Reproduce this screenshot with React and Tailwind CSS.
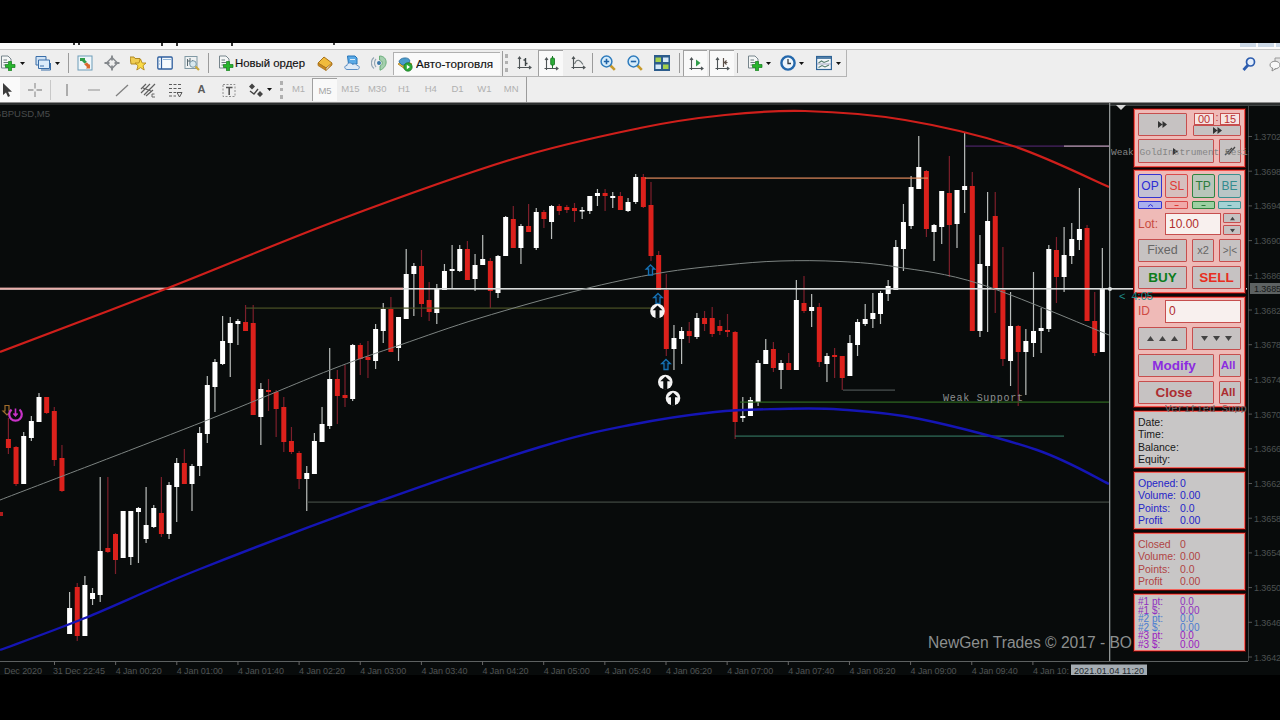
import clsx from 'clsx'

// bar: [high, bodyTop, bodyBottom, low, up]
const BARS = [
  [418, 439, 448, 454, 0], [446, 447, 484, 486, 0], [432, 436, 484, 484, 1], [416, 421, 438, 441, 1], [393, 397, 422, 422, 1],
  [397, 397, 413, 414, 0], [407, 411, 460, 466, 0], [445, 458, 491, 492, 0], [592, 608, 634, 634, 1], [583, 587, 636, 641, 0],
  [576, 585, 636, 636, 1], [588, 593, 599, 605, 1], [477, 551, 595, 602, 1], [477, 548, 552, 553, 0], [533, 534, 560, 574, 0],
  [511, 511, 558, 558, 1], [511, 511, 557, 565, 1], [507, 508, 512, 563, 1], [487, 525, 539, 543, 1], [505, 508, 527, 528, 1],
  [477, 513, 534, 537, 0], [482, 485, 534, 539, 1], [458, 463, 487, 522, 1], [449, 463, 484, 484, 0], [464, 466, 484, 511, 1],
  [427, 433, 466, 476, 1], [376, 385, 434, 443, 1], [359, 362, 387, 412, 1], [316, 341, 364, 365, 1], [317, 323, 343, 377, 1],
  [319, 321, 324, 345, 1], [305, 322, 331, 331, 0], [305, 323, 415, 415, 0], [383, 389, 417, 445, 1], [379, 390, 392, 411, 0],
  [390, 392, 409, 437, 0], [397, 407, 442, 452, 0], [427, 441, 452, 454, 0], [451, 453, 479, 489, 0], [466, 473, 479, 511, 1],
  [433, 441, 474, 474, 1], [407, 424, 442, 442, 1], [348, 379, 426, 429, 1], [370, 379, 396, 424, 0], [365, 395, 398, 407, 0],
  [344, 345, 399, 401, 1], [343, 345, 359, 375, 0], [341, 357, 360, 378, 0], [324, 329, 361, 369, 1], [303, 309, 331, 343, 1],
  [297, 309, 352, 352, 0], [317, 317, 348, 361, 1], [249, 274, 319, 319, 1], [263, 266, 274, 316, 1], [250, 266, 304, 317, 0],
  [282, 300, 312, 321, 0], [284, 289, 313, 324, 1], [264, 271, 290, 290, 1], [245, 269, 271, 288, 1], [245, 249, 271, 272, 1],
  [241, 249, 280, 280, 0], [254, 265, 279, 291, 1], [235, 259, 265, 265, 1], [258, 261, 291, 308, 0], [255, 256, 293, 298, 1],
  [216, 217, 256, 256, 1], [206, 219, 248, 248, 0], [224, 226, 248, 264, 1], [204, 226, 232, 232, 0], [208, 212, 248, 250, 1],
  [210, 212, 219, 228, 0], [205, 206, 222, 239, 1], [204, 206, 211, 215, 0], [205, 207, 210, 213, 0], [203, 208, 211, 222, 0],
  [207, 210, 211, 219, 1], [196, 196, 211, 214, 1], [189, 193, 196, 206, 1], [189, 193, 196, 211, 0], [192, 196, 198, 208, 1],
  [192, 196, 210, 210, 0], [198, 202, 211, 212, 1], [174, 177, 202, 204, 1], [174, 177, 207, 208, 0], [182, 205, 256, 261, 0],
  [251, 255, 290, 290, 0], [274, 290, 349, 356, 0], [325, 338, 349, 370, 1], [327, 331, 339, 364, 1], [322, 331, 336, 343, 0],
  [313, 318, 337, 339, 1], [311, 318, 324, 331, 0], [307, 318, 334, 337, 0], [320, 326, 331, 335, 0], [314, 330, 332, 337, 0],
  [331, 332, 422, 439, 0], [397, 416, 418, 422, 1], [397, 400, 416, 416, 1], [360, 363, 402, 406, 1], [339, 350, 364, 364, 1],
  [342, 349, 368, 372, 0], [360, 363, 370, 389, 1], [353, 363, 370, 370, 0], [280, 300, 370, 370, 1], [276, 303, 311, 313, 0],
  [294, 307, 311, 327, 1], [303, 307, 362, 367, 0], [353, 356, 364, 382, 1], [348, 355, 357, 378, 0], [356, 356, 378, 390, 0],
  [335, 343, 376, 376, 1], [319, 322, 345, 356, 1], [304, 319, 324, 326, 1], [293, 313, 319, 328, 1], [291, 293, 314, 324, 1],
  [280, 286, 294, 301, 1], [240, 247, 290, 290, 1], [204, 222, 249, 271, 1], [176, 187, 226, 229, 1], [136, 167, 189, 189, 1],
  [170, 171, 229, 237, 0], [224, 225, 232, 261, 1], [191, 191, 227, 244, 1], [156, 193, 225, 277, 0], [190, 190, 224, 248, 1],
  [133, 186, 190, 213, 1], [172, 186, 331, 331, 0], [235, 264, 331, 337, 1], [192, 221, 266, 332, 1], [192, 216, 290, 313, 0],
  [247, 290, 359, 366, 0], [292, 326, 361, 386, 1], [325, 326, 352, 406, 0], [329, 341, 352, 395, 1], [272, 331, 343, 357, 1],
  [308, 328, 331, 353, 1], [245, 249, 329, 332, 1], [237, 250, 277, 303, 0], [227, 255, 277, 292, 1], [223, 239, 256, 264, 1],
  [188, 229, 240, 250, 1], [225, 228, 321, 321, 0], [292, 321, 353, 356, 0], [248, 289, 352, 352, 1],
]

const UPPER = [[0, 352], [168, 288], [340, 219.5], [513, 159], [640, 128], [725, 115], [805, 111], [905, 120], [1013, 146], [1109, 187]]
const MIDDLE = [[0, 500], [200, 423], [330, 370], [400, 345], [480, 318], [580, 290], [660, 273], [725, 265], [780, 261], [840, 261.5], [897, 267], [980, 284], [1109, 335]]
const LOWER = [[0, 650], [85, 618], [200, 569], [380, 501], [540, 447], [630, 425], [715, 412], [780, 409], [840, 409.5], [920, 419], [1037, 450], [1109, 484]]

const LEVELS = [
  [246, 655, 308, '#4a5226'], [645, 928, 178, '#e0895c'], [965, 1064, 146, '#4c2468'], [1064, 1109, 146, '#c9a6c6'],
  [843, 895, 390, '#4d5454'], [740, 1109, 402, '#2f6a22'], [735, 1064, 436, '#31705c'], [307, 1109, 502, '#424a44'],
]

const PRICES = ['1.37020', '1.36980', '1.36940', '1.36900', '1.36860', '1.36820', '1.36780', '1.36740', '1.36700', '1.36660', '1.36620', '1.36580', '1.36540', '1.36500', '1.36460', '1.36420']
const TIMES = ['31 Dec 22:45', '4 Jan 00:20', '4 Jan 01:00', '4 Jan 01:40', '4 Jan 02:20', '4 Jan 03:00', '4 Jan 03:40', '4 Jan 04:20', '4 Jan 05:00', '4 Jan 05:40', '4 Jan 06:20', '4 Jan 07:00', '4 Jan 07:40', '4 Jan 08:20', '4 Jan 09:00', '4 Jan 09:40']

const barX = (i) => 8.4 + i * 7.65

// catmull-rom through the points
function smooth(p) {
  let d = `M${p[0][0]} ${p[0][1]}`
  for (let i = 0; i < p.length - 1; i++) {
    const a = p[i - 1] || p[i]
    const b = p[i]
    const c = p[i + 1]
    const e = p[i + 2] || c
    d += ` C${b[0] + (c[0] - a[0]) / 6} ${b[1] + (c[1] - a[1]) / 6} ${c[0] - (e[0] - b[0]) / 6} ${c[1] - (e[1] - b[1]) / 6} ${c[0]} ${c[1]}`
  }
  return d
}

const BlueArrow = ({ x, y }) => (
  <path transform={`translate(${x} ${y})`} d="M0 -5L4.3 -1H2V5H-2V-1H-4.3Z" fill="#04182a" stroke="#1672b4" strokeWidth="1.3" />
)

const RoundArrow = ({ x, y }) => (
  <g transform={`translate(${x} ${y})`}>
    <circle r="7.3" fill="#f4f4f4" />
    <path d="M0 -5.4L5 -0.8H2V7.5H-2V-0.8H-5Z" fill="#0a0d0d" />
  </g>
)

function Chart() {
  return (
    <svg className="block w-[1280px] h-[572px]" viewBox="0 103 1280 572" fontFamily="'Liberation Sans', sans-serif">
      <rect x="0" y="103" width="1280" height="572" fill="#080b0b" />
      <rect x="0" y="103" width="1280" height="2" fill="#2c2f2f" />
      <text x="-6" y="116.5" fontSize="9.5" fill="#484c4c" textLength="56">GBPUSD,M5</text>

      {/* axes */}
      <path d="M1109 105.5H1280M1248.5 105V661M0 661.5H1248" stroke="#3f4444" fill="none" />
      <path d="M0 661.5H1248" stroke="#5d6161" />
      {PRICES.map((p, i) => (
        <g key={p}>
          <path d={`M1248 ${136.5 + i * 34.7}h4`} stroke="#555" />
          <text x="1254" y={140 + i * 34.7} fontSize="9" fill="#4c5151" textLength="32">{p}</text>
        </g>
      ))}
      <rect x="1250" y="283" width="30" height="11" fill="#5d6262" />
      <text x="1254" y="292" fontSize="9" fill="#161818" textLength="32">1.36855</text>
      <text x="4" y="674" fontSize="9" fill="#505454" textLength="38">Dec 2020</text>
      {TIMES.map((t, i) => (
        <g key={t}>
          <path d={`M${54.5 + i * 61.15} 661v4`} stroke="#666" />
          <text x={(i ? 54.5 : 53) + i * 61.15} y="674" fontSize="9" fill="#505454" textLength={i ? 46 : 52}>{t}</text>
        </g>
      ))}
      <path d="M1032.9 661v4" stroke="#666" />
      <text x="1033" y="674" fontSize="9" fill="#505454" textLength="36">4 Jan 10:</text>
      <rect x="1071" y="664.5" width="76" height="10.5" fill="#a4acb2" />
      <text x="1074" y="673.5" fontSize="9" fill="#22282e" textLength="70">2021.01.04 11:20</text>

      {/* bars */}
      <rect x="0" y="512" width="3" height="4" fill="#b01c1c" />
      {BARS.map(([h, t, b, l, up], i) => (
        <g key={i}>
          <rect x={barX(i) - 0.6} y={h} width="1.2" height={l - h} fill={up ? '#b9bdbb' : '#7c1f2b'} />
          <rect x={barX(i) - 2.5} y={t} width="5" height={Math.max(b - t, 1.5)} fill={up ? '#ffffff' : '#dc211c'} />
        </g>
      ))}

      {/* levels */}
      {LEVELS.map(([x1, x2, y, c]) => (
        <rect key={`${x1}-${y}`} x={x1} y={y - 0.5} width={x2 - x1} height="1.2" fill={c} />
      ))}
      <rect x="0" y="288" width="1247" height="1.6" fill="#d9dcdc" />
      <rect x="0" y="287.6" width="403" height="2" fill="#eab0ac" />

      {/* bands */}
      <path d={smooth(MIDDLE)} fill="none" stroke="#7d8482" strokeWidth="1" />
      <path d={smooth(UPPER)} fill="none" stroke="#cf1f1b" strokeWidth="2.2" />
      <path d={smooth(LOWER)} fill="none" stroke="#1515b4" strokeWidth="2.4" />
      <rect x="1109" y="103" width="1.3" height="558" fill="#8f9494" />
      <path d="M1116 105H1126L1121 110Z" fill="#d8d8d8" />
      <circle cx="1110" cy="289" r="2" fill="#dfe3e3" />

      {/* signals */}
      <BlueArrow x={650.5} y={270} />
      <BlueArrow x={658} y={298.5} />
      <BlueArrow x={666} y={364.5} />
      <RoundArrow x={657.5} y={311} />
      <RoundArrow x={665.3} y={382} />
      <RoundArrow x={673} y={398} />
      <path d="M5 405.5H9V411H11L7 415L3 411H5Z" fill="none" stroke="#a06c2c" strokeWidth="1.2" />
      <path d="M11.5 409.5A6.3 6.3 0 1 0 19.5 409.5" fill="none" stroke="#c832c8" strokeWidth="2.2" />
      <path d="M15.5 408.5V415M13.4 413.5L15.5 415.8L17.6 413.5" fill="none" stroke="#c832c8" strokeWidth="1.6" />

      <text x="943" y="401" fontSize="10" fontFamily="'Liberation Mono', monospace" fill="#8d9191" textLength="80">Weak Support</text>
      <text x="928" y="648" fontSize="16" fill="#8c8f8f" textLength="204" lengthAdjust="spacingAndGlyphs">NewGen Trades © 2017 - BO</text>
    </svg>
  )
}

/* ---------- trade panel ---------- */

const Box = ({ className, children }) => (
  <div className={clsx('w-[111px] border px-[3px] flex flex-col shrink-0 outline outline-[#5c0505]', className)}>{children}</div>
)

const Btn = ({ bg = 'bg-[#c6c2c2]', className, children }) => (
  <button className={clsx('flex items-center justify-center border rounded-[1px] whitespace-nowrap leading-none', bg, className)}>{children}</button>
)

const RED = 'border-[#c64e4e]'

const Forward = () => (
  <svg className="w-[9px] h-[7px]" viewBox="0 0 9 7"><path d="M0 0L4.5 3.5L0 7ZM4.5 0L9 3.5L4.5 7Z" fill="#333" /></svg>
)

const Tri = ({ down }) => (
  <svg className="w-[7px] h-[5px]" viewBox="0 0 7 5"><path d={down ? 'M0 0H7L3.5 5Z' : 'M0 5H7L3.5 0Z'} fill="#444" /></svg>
)

const MODES = [
  ['OP', 'border-[#3434d0] text-[#2c2cd4] w-6', 'bg-[#c3c1d4]', 'bg-[#aab0ee]'],
  ['SL', 'border-[#d84c4c] text-[#e03a34] w-[23px]', 'bg-[#d6bfbe]', 'bg-[#f0aaaa]'],
  ['TP', 'border-[#2f8440] text-[#2c7c3c] w-[23px]', 'bg-[#b8c6ba]', 'bg-[#9cd0a2]'],
  ['BE', 'border-[#3a9090] text-[#348c90] w-[23px]', 'bg-[#b9c6c6]', 'bg-[#a4d2d4]'],
]

const STATS = [
  ['text-[#2424c8]', [['Opened:', '0'], ['Volume:', '0.00'], ['Points:', '0.0'], ['Profit', '0.00']]],
  ['text-[#b04444]', [['Closed', '0'], ['Volume:', '0.00'], ['Points:', '0.0'], ['Profit', '0.00']]],
]

const TARGETS = [
  ['#1 pt:', '0.0', 'text-[#9030c0]'], ['#1 $:', '0.00', 'text-[#9030c0]'],
  ['#2 pt:', '0.0', 'text-[#4c7cd0]'], ['#2 $:', '0.00', 'text-[#4c7cd0]'],
  ['#3 pt:', '0.0', 'text-[#9a20c0]'], ['#3 $:', '0.00', 'text-[#9a20c0]'],
]

const CONTROLS = 'border-[#f4514a] bg-[#efbab7]'
const INFO = 'border-[#f4645c] bg-[#c8c6c6] h-[57px]'

function TradePanel() {
  return (
    <div className="absolute left-[1134px] top-[6px] flex flex-col gap-1">
      <Box className={clsx(CONTROLS, 'h-[58px] pt-[3px] gap-[3px] -mb-px')}>
        <div className="flex justify-between h-[23px]">
          <Btn className={clsx(RED, 'w-[49px]')}><Forward /></Btn>
          <div className="w-[48px] flex flex-col">
            <div className="h-3 flex justify-between px-px text-[11px] leading-[11px] text-[#b83030] text-center">
              <span className="w-5 bg-[#f6e4e2] border border-[#c64e4e]">00</span>
              <span className="leading-[9px]">:</span>
              <span className="w-5 bg-[#f6e4e2] border border-[#c64e4e]">15</span>
            </div>
            <Btn className={clsx(RED, 'h-[11px]')}><Forward /></Btn>
          </div>
        </div>
        <div className="flex justify-between h-6">
          <Btn className={clsx(RED, 'w-[76px]')}>
            <svg className="w-1.5 h-[7px]" viewBox="0 0 6 7"><path d="M0 0L5 3.5L0 7Z" fill="#333" /></svg>
          </Btn>
          <Btn className={clsx(RED, 'w-[22px]')}>
            <svg className="w-3 h-2.5" viewBox="0 0 12 10"><path d="M2 5L5 8L11 1M1 9L8 2" fill="none" stroke="#444" strokeWidth="1.3" /></svg>
          </Btn>
        </div>
      </Box>

      <Box className={clsx(CONTROLS, 'h-[123px] pt-[3px] gap-1')}>
        <div className="flex flex-col gap-[3px]">
          <div className="flex justify-between h-6">
            {MODES.map(([m, cls, bg]) => <Btn key={m} bg={bg} className={clsx('text-[12px] rounded-[2px]', cls)}>{m}</Btn>)}
          </div>
          <div className="flex justify-between h-2">
            {MODES.map(([m, cls, , bg], i) => (
              <Btn key={m} bg={bg} className={cls}>
                <svg className="w-[5px] h-[3px]" viewBox="0 0 5 3"><path d={i === 0 ? 'M0 2.5L2.5 .5L5 2.5' : 'M.5 1.5H4.5'} fill="none" stroke="currentColor" /></svg>
              </Btn>
            ))}
          </div>
        </div>
        <div className="flex h-[22px]">
          <span className="w-[27px] text-[12px] leading-[22px] text-[#c84a40]">Lot:</span>
          <span className="w-14 bg-[#f8f0ee] border border-[#c64e4e] pl-[3px] text-[12px] leading-5 text-[#b02c2c]">10.00</span>
          <div className="ml-auto w-[18px] flex flex-col justify-between">
            <Btn className={clsx(RED, 'h-2.5')}><span className="scale-75 flex"><Tri /></span></Btn>
            <Btn className={clsx(RED, 'h-2.5')}><span className="scale-75 flex"><Tri down /></span></Btn>
          </div>
        </div>
        <div className="flex justify-between h-[23px] text-[#666]">
          <Btn className={clsx(RED, 'w-[49px] text-[12.5px]')}>Fixed</Btn>
          <Btn className={clsx(RED, 'w-[22px] ml-[5px] text-[11px]')}>x2</Btn>
          <Btn className={clsx(RED, 'w-[22px] text-[10px] ml-[5px]')}>&gt;|&lt;</Btn>
        </div>
        <div className="flex justify-between h-[23px] font-bold text-[13.5px]">
          <Btn className={clsx(RED, 'w-[49px] text-[#0c7c1c]')}>BUY</Btn>
          <Btn className={clsx(RED, 'w-[49px] text-[#e82c20]')}>SELL</Btn>
        </div>
      </Box>

      <Box className={clsx(CONTROLS, 'h-[110px] pt-[2px] gap-1')}>
        <div className="flex h-[23px]">
          <span className="w-[27px] text-[12px] leading-[23px] text-[#d04a44]">ID</span>
          <span className="flex-1 bg-[#f8f0ee] border border-[#c64e4e] pl-[3px] text-[12px] leading-[21px] text-[#b02c2c]">0</span>
        </div>
        <div className="flex justify-between h-[23px]">
          <Btn className={clsx(RED, 'w-[49px] gap-[5px]')}><Tri /><Tri /><Tri /></Btn>
          <Btn className={clsx(RED, 'w-[49px] gap-[5px]')}><Tri down /><Tri down /><Tri down /></Btn>
        </div>
        <div className="flex justify-between h-[23px] font-bold text-[#8c2ce0]">
          <Btn className={clsx(RED, 'w-[76px] pr-1 text-[13.5px]')}>Modify</Btn>
          <Btn className={clsx(RED, 'w-[22px] pr-1 text-[11.5px]')}>All</Btn>
        </div>
        <div className="flex justify-between h-[23px] font-bold text-[#ac2c30]">
          <Btn className={clsx(RED, 'w-[76px] pr-1 text-[13.5px]')}>Close</Btn>
          <Btn className={clsx(RED, 'w-[22px] pr-1 text-[11.5px]')}>All</Btn>
        </div>
      </Box>

      <Box className={clsx(INFO, 'pt-[4px] text-[10.5px] leading-[12.3px] text-[#181818]')}>
        <span>Date:</span>
        <span>Time:</span>
        <span>Balance:</span>
        <span>Equity:</span>
      </Box>

      {STATS.map(([color, rows]) => (
        <Box key={color} className={clsx(INFO, 'pt-[4px] text-[10.5px] leading-[12.3px]', color)}>
          {rows.map(([k, v]) => <div key={k} className="flex"><span className="w-[42px]">{k}</span><span>{v}</span></div>)}
        </Box>
      ))}

      <Box className={clsx(INFO, 'pt-[3px] text-[10px] leading-[8.5px]')}>
        {TARGETS.map(([k, v, color]) => <div key={k} className={clsx('flex', color)}><span className="w-[42px]">{k}</span><span>{v}</span></div>)}
      </Box>
    </div>
  )
}

/* ---------- toolbars ---------- */

const Ico = ({ className, children }) => (
  <span className={clsx('flex items-center justify-center h-full shrink-0', className)}>
    <svg className="w-4 h-4 shrink-0" viewBox="0 0 16 16" fill="none">{children}</svg>
  </span>
)

const Caret = ({ className }) => (
  <span className={clsx('w-3 flex justify-center shrink-0', className)}>
    <svg className="w-[5px] h-[3px]" viewBox="0 0 5 3"><path d="M0 0H5L2.5 3Z" fill="#111" /></svg>
  </span>
)

const Sep = ({ className }) => <span className={clsx('h-5 border-l border-[#9b9b9b] shrink-0', className)} />

const Grip = ({ className }) => <span className={clsx('w-[3px] h-[18px] border-l-[3px] border-dotted border-[#b0b0b0] shrink-0', className)} />

const PRESSED = 'bg-[#f9f9f9] border-l border-t border-[#a0a0a0]'

const Plus = () => <path d="M8.5 6.5H11.5V9.5H15V12.5H11.5V15.8H8.5V12.5H5.5V9.5H8.5Z" fill="#27b52d" stroke="#137a1b" strokeWidth=".7" />

const Doc = () => (
  <>
    <path d="M1.5 1H8L11 4V13H1.5Z" fill="#f4f6f6" stroke="#77858c" />
    <path d="M3.5 5H7M3.5 7.5H8M3.5 10H6" stroke="#6c7a80" />
  </>
)

const Lens = ({ plus }) => (
  <>
    <path d="M10 10L14.8 14.8" stroke="#c79a2c" strokeWidth="2.6" />
    <circle cx="6.5" cy="6.5" r="5.4" fill="#d6ecfa" stroke="#2f7cbd" strokeWidth="1.5" />
    <path d={plus ? 'M3.8 6.5H9.2M6.5 3.8V9.2' : 'M3.8 6.5H9.2'} stroke="#1e62a6" strokeWidth="1.6" />
  </>
)

const Axes = () => <path d="M3.5 2V14M1.5 12.5H15M2 4L3.5 2L5 4M13 11L15 12.5L13 14" stroke="#4e5456" strokeWidth="1.1" />

function MainToolbar() {
  return (
    <div className="h-[27px] w-[847px] flex items-center border-b border-r border-[#b4b4b4]">
      <Ico className="w-4"><Doc /><Plus /></Ico>
      <Caret />
      <Ico className="ml-[6px] w-[18px]">
        <path d="M1 1.5H11V10H1Z" fill="#cfe2f5" stroke="#3a6ea8" />
        <path d="M3.5 5H14.5V13.5H3.5Z" fill="#dcecfa" stroke="#3a6ea8" />
        <path d="M6 15H15.5V8M5 11H9" stroke="#3a6ea8" />
      </Ico>
      <Caret className="-ml-px" />
      <Sep className="ml-[5px]" />
      <Ico className="ml-[2px] w-[27px]">
        <rect x="1" y="1" width="14" height="14" fill="#eef6fa" stroke="#6c9cb8" />
        <path d="M3 3H8V5L10 7L7.5 8.5L5 6H3Z" fill="#2f9c49" />
        <path d="M7 9L10 7.5L12 9.5H13V13.5H9L10 12Z" fill="#d9682c" />
      </Ico>
      <Ico className="w-[27px]">
        <path d="M8 2.5L13.5 8L8 13.5L2.5 8Z" stroke="#84888c" strokeWidth="1.4" />
        <path d="M8 .5V5.5M8 10.5V15.5M.5 8H5.5M10.5 8H15.5" stroke="#84888c" strokeWidth="1.8" />
      </Ico>
      <Ico className="w-[26px]">
        <path d="M0 2H4L5 3.5H10V9H1Z" fill="#f0cd52" stroke="#b18a24" />
        <path d="M10.5 4L12.2 8H16L13 10.7L14.2 15L10.5 12.6L6.8 15L8 10.7L5 8H8.8Z" fill="#fadb48" stroke="#b48a1c" strokeWidth=".9" />
      </Ico>
      <Ico className="w-[27px]">
        <rect x=".8" y="2" width="14.4" height="12" rx="1" fill="#f4f9fd" stroke="#2f5f9e" strokeWidth="1.3" />
        <path d="M4.5 2V14" stroke="#2f5f9e" strokeWidth="1.2" />
        <path d="M6 4.5H14M2 6H3M2 9H3" stroke="#8fb4d8" />
      </Ico>
      <Ico className="w-[27px]">
        <rect x="1" y="1.5" width="12" height="12" fill="#eef1f2" stroke="#8199a4" />
        <path d="M3.5 4V11M6 3V9M8.5 5V8M3.5 6H6" stroke="#566870" />
        <circle cx="9" cy="9" r="3.3" fill="#d9e9ef" stroke="#7898a8" />
        <path d="M11.5 11.5L15 15" stroke="#c9a83c" strokeWidth="2.2" />
      </Ico>
      <Sep className="ml-[3px]" />
      <Ico className="ml-[9px] w-4"><Doc /><Plus /></Ico>
      <svg className="ml-[1px] w-[72px] h-4 shrink-0" viewBox="0 0 72 16"><text x="0" y="11.5" fontSize="11" fontFamily="'Liberation Sans', sans-serif" fill="#111" stroke="#111" strokeWidth=".15" textLength="70" lengthAdjust="spacingAndGlyphs">Новый ордер</text></svg>
      <Ico className="ml-[5px] w-[26px]">
        <path d="M1 8L7 2L15 8L9 13Z" fill="#f0bb3c" stroke="#a8721c" />
        <path d="M1 8V10.5L9 15.5V13ZM9 15.5L15 10V8" fill="#c98820" stroke="#a8721c" strokeWidth=".8" />
      </Ico>
      <Ico className="w-[27px]">
        <path d="M3.5 1H11L13 3V9H4.5Z" fill="#59a9e6" stroke="#2474b8" />
        <path d="M6 4.5H11" stroke="#d8ecfa" />
        <path d="M3 14.5C0 14 0 10.5 3 10.5C3 7.5 7 7 8.5 9.5C11 8 13 9.5 13 10.5C16 10.5 16 14 13.5 14.5Z" fill="#dfeaf6" stroke="#5a8ec4" />
      </Ico>
      <Ico className="w-[27px]">
        <path d="M5 4C3 6 3 10 5 12M3 2.5C-.5 5 -.5 11 3 13.5" stroke="#93a6b4" strokeWidth="1.2" />
        <path d="M8.5 1C17 1 17.5 12 9 15.2V11C12 10 12 5.5 8.5 5Z" fill="#a4cfae" stroke="#5fa870" strokeWidth=".9" />
        <circle cx="8" cy="8" r="2" fill="#3c78a8" />
      </Ico>
      <div className="ml-px w-[107px] h-[23px] flex items-center bg-[#fafafa] border-l border-t border-[#b0b0b0]">
        <Ico className="ml-[3px] w-4">
          <path d="M1 8L8 4L15 8L8 13Z" fill="#e6b83c" stroke="#a67c1c" strokeWidth=".8" />
          <path d="M2 6C2 1.5 12 0 13 5L10 9H5Z" fill="#4c9ccc" stroke="#26689a" strokeWidth=".8" />
          <circle cx="11" cy="11" r="4.2" fill="#2cab38" stroke="#14701e" strokeWidth=".7" />
          <path d="M9.8 8.8V13.2L13 11Z" fill="#fff" />
        </Ico>
        <svg className="ml-[3px] w-[80px] h-4 shrink-0" viewBox="0 0 80 16"><text x="0" y="11.5" fontSize="11" fontFamily="'Liberation Sans', sans-serif" fill="#111" stroke="#111" strokeWidth=".15" textLength="77" lengthAdjust="spacingAndGlyphs">Авто-торговля</text></svg>
      </div>
      <Sep className="ml-[2px] h-[25px]" />
      <Grip className="ml-[2px]" />
      <Ico className="ml-px w-[29px]"><Axes /><path d="M9.5 3V11M7.5 5H9.5M9.5 8.5H11.5" stroke="#3b4244" strokeWidth="1.4" /></Ico>
      <Ico className={clsx('w-[25px] h-[23px]', PRESSED)}><Axes /><path d="M9.5 0V12" stroke="#1c7c28" /><rect x="7.7" y="2" width="3.8" height="7" rx="1" fill="#2cab38" stroke="#167020" strokeWidth=".8" /></Ico>
      <Ico className="ml-px w-7"><Axes /><path d="M4.5 9C7 3 10 5 13 9.5" stroke="#6c7476" strokeWidth="1.1" /></Ico>
      <Sep />
      <Ico className="ml-px w-[27px]"><Lens plus /></Ico>
      <Ico className="w-[27px]"><Lens /></Ico>
      <Ico className="w-[27px]">
        <rect x="0" y="0" width="16" height="16" fill="#2c5c8c" />
        <path d="M9 2.5H14.5V7H9ZM1.5 9.5H7V14H1.5Z" fill="#d4e8f8" />
        <path d="M1.5 2.5H7V7H1.5ZM9 9.5H14.5V14H9Z" fill="#a4d04c" />
      </Ico>
      <Sep className="ml-1" />
      <Ico className={clsx('ml-[3px] w-[24px] h-[23px]', PRESSED)}><Axes /><path d="M8 3.5V10.5L12.5 7Z" fill="#2f9c49" /></Ico>
      <Ico className={clsx('ml-[2px] w-[25px] h-[23px]', PRESSED)}><Axes /><path d="M9.5 2V11M13.5 6.5H10.5M12.5 4.5L10.5 6.5L12.5 8.5" stroke="#5c5048" strokeWidth="1.2" /></Ico>
      <Sep className="ml-[3px]" />
      <Ico className="ml-[7px] w-[20px]"><Doc /><Plus /></Ico>
      <Caret className="-ml-[3px]" />
      <Ico className="ml-[6px] w-4">
        <circle cx="8" cy="8" r="6.6" fill="#eef6fc" stroke="#2468ac" strokeWidth="2.4" />
        <path d="M8 4V8.5H11" stroke="#333c44" strokeWidth="1.3" />
      </Ico>
      <Caret className="-ml-px" />
      <Ico className="ml-[9px] w-4">
        <rect x=".6" y="1.5" width="14.8" height="13" fill="#f2f7fa" stroke="#2f6496" strokeWidth="1.2" />
        <path d="M1 3H15" stroke="#2f6496" strokeWidth="1.6" />
        <path d="M2.5 8L5.5 6L8 7.5L13 5.5M2.5 12.5L6 10.5L9 12L13 10" stroke="#557c6c" strokeWidth="1.1" />
        <path d="M1 9H15" stroke="#88a" strokeWidth=".7" />
      </Ico>
      <Caret />
    </div>
  )
}

const FRAMES = ['M15', 'M30', 'H1', 'H4', 'D1', 'W1', 'MN']

function DrawToolbar() {
  return (
    <div className="h-[25px] w-[527px] flex items-center border-r border-[#9b9b9b]">
      <Ico className="w-5 bg-[#fafafa]"><path d="M1 1V13L4 10.5L6 15L8 14L6 9.8H10Z" fill="#3c3c3c" /></Ico>
      <Ico className="w-[30px]"><path d="M8 1V6.5M8 9.5V15M1 8H6.5M9.5 8H15" stroke="#9a9a9a" strokeWidth="1.3" /></Ico>
      <Sep className="border-[#c8c8c8]" />
      <Ico className="ml-[2px] w-[27px]"><path d="M8 2V14" stroke="#808080" strokeWidth="1.2" /></Ico>
      <Ico className="w-7"><path d="M2 8H14" stroke="#a0a0a0" strokeWidth="1.2" /></Ico>
      <Ico className="w-[27px]"><path d="M2 14L14 3" stroke="#808080" strokeWidth="1.3" /></Ico>
      <Ico className="w-[26px]"><path d="M1 11L10 2M4 13L15 2M1 7L6 2M6 14L13 8M3 6L11 9" stroke="#606060" strokeWidth="1.2" /><path d="M14.5 12H12V15H15" stroke="#666" /></Ico>
      <Ico className="w-[27px]"><path d="M2 2.5H15M2 6.5H15M2 10.5H9M2 14H9" stroke="#5c5c5c" strokeWidth="1.2" strokeDasharray="3 1.5" /><path d="M10 10.5H15L12.5 15Z" stroke="#555" /></Ico>
      <span className="w-[27px] text-center text-[11px] font-bold text-[#5c5c5c]">A</span>
      <Ico className="w-[27px]">
        <rect x="2" y="2.5" width="12" height="12" stroke="#909090" strokeDasharray="2 1.5" />
        <path d="M5 5.5H11.5M8.2 5.5V13" stroke="#555" strokeWidth="1.6" />
      </Ico>
      <Ico className="w-[27px]"><path d="M1 4.5L4 1.5L7 4.5L4 7.5ZM9 12L12 9L15 12L12 15Z" fill="#444" /><path d="M2 9L6 12L10 7" stroke="#444" strokeWidth="1.4" /></Ico>
      <Caret className="-ml-[6px]" />
      <Grip className="ml-[5px]" />
      <span className="ml-[2px] w-[27px] text-center text-[9.5px] text-[#b0b0b0]">M1</span>
      <span className={clsx('w-[25px] h-[23px] text-center text-[9.5px] leading-[23px] text-[#a4a4a4]', PRESSED)}>M5</span>
      {FRAMES.map(f => <span key={f} className="w-[26.8px] text-center text-[9.5px] text-[#b0b0b0]">{f}</span>)}
    </div>
  )
}

export default function App() {
  return (
    <div className="w-[1280px] h-[720px] bg-black flex flex-col overflow-hidden font-['Liberation_Sans',sans-serif]">
      <header className="mt-[43px] h-[60px] bg-[#eeeeee] border-b border-[#8c8c8c] flex flex-col shrink-0 overflow-hidden">
        {/* bottom edge of the menu row */}
        <div className="h-[7px] shrink-0 flex items-start bg-[#fbfbfb] border-b border-[#c4c4c4]">
          <span className="ml-[73px] w-[2px] h-[2px] bg-[#333]" />
          <span className="ml-[3px] w-[2px] h-[2px] bg-[#333]" />
          <span className="ml-[81px] w-[2px] h-[3px] bg-[#333]" />
          <span className="ml-[13px] w-[2px] h-[3px] bg-[#333]" />
          <span className="ml-[53px] w-[2px] h-[3px] bg-[#333]" />
          <span className="ml-[100px] w-[2px] h-[2px] bg-[#444]" />
          <span className="ml-auto w-4 h-[4px] bg-[#cbd8e6]" />
          <span className="ml-[2px] w-4 h-[4px] bg-[#cbd8e6]" />
          <span className="ml-[2px] w-1 h-[4px] bg-[#cbd8e6]" />
        </div>
        <div className="flex justify-between">
          <MainToolbar />
          <div className="flex items-center">
            <Ico className="w-4">
              <path d="M7 9L2.5 14" stroke="#2c5cae" strokeWidth="2.8" />
              <circle cx="9.5" cy="6" r="4" fill="#e4eefb" stroke="#2c5cae" strokeWidth="1.7" />
            </Ico>
            <Ico className="ml-3 -mr-[5px] w-4">
              <path d="M6 2H15V9H6Z" fill="#e4e4e4" stroke="#9a9a9a" />
              <ellipse cx="6" cy="9" rx="5" ry="3.8" fill="#f8f8f8" stroke="#8c8c8c" />
              <path d="M3.5 12L3 15L7 12.5" fill="#f8f8f8" stroke="#8c8c8c" />
            </Ico>
          </div>
        </div>
        <DrawToolbar />
      </header>

      <main className="relative h-[572px] shrink-0">
        <Chart />
        <TradePanel />
        {/* labels that the terminal paints over the panel */}
        <span className="absolute left-[1111px] top-[44px] w-[138px] overflow-hidden whitespace-nowrap font-['Liberation_Mono',monospace] text-[9.5px] leading-3 text-[#858585]">Weak GoldInstrument Resis</span>
        <span className="absolute left-[1119px] top-[187px] whitespace-nowrap text-[11px] leading-3 text-[#1f8c88] [word-spacing:3px]">&lt; 4:05</span>
        <span className="absolute left-[1165px] top-[302px] w-[83px] overflow-hidden whitespace-nowrap font-['Liberation_Mono',monospace] text-[10.5px] leading-[8px] text-[#6c6c6c]">Verified Supp</span>
      </main>
    </div>
  )
}
